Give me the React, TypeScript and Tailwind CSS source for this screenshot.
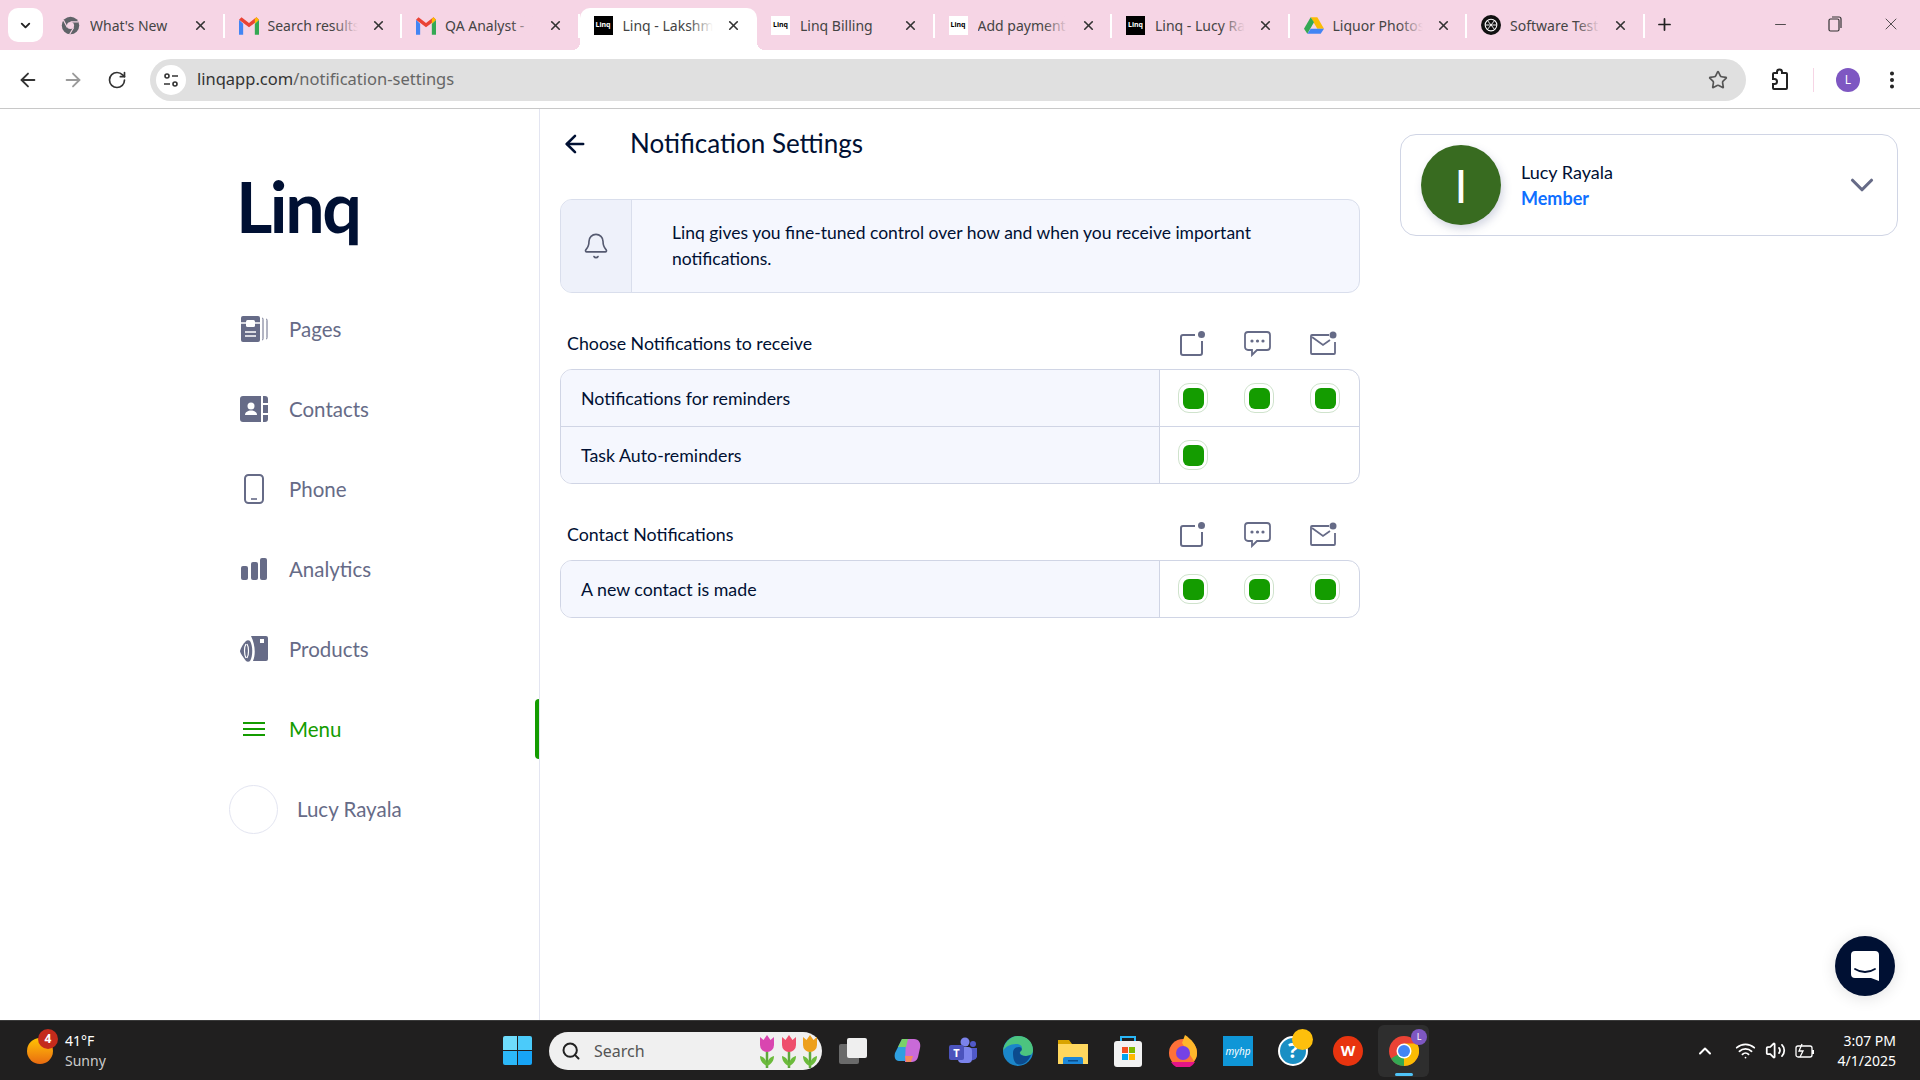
import { ArrowLeft, ArrowRight, Bell, ChevronDown, ChevronUp, EllipsisVertical, Minus, Plus, RotateCw, Search, Star, Volume2, Wifi, X } from "lucide-react";
import type { ReactNode } from "react";

const FONT = "font-['Lato','Noto_Sans',sans-serif]";

function LinqFav({ dark }: { dark?: boolean }) {
    return (
        <span className={`flex h-[19px] w-[19px] items-center justify-center text-[7px] font-bold ${dark ? "bg-black text-white" : "bg-white text-black"}`}>
            Linq
        </span>
    );
}

function GmailFav() {
    return (
        <svg width="20" height="19" viewBox="0 0 24 22" fill="none">
            <path d="M0 4v18h5V9z" fill="#4285f4" />
            <path d="M24 4v18h-5V9z" fill="#34a853" />
            <path d="M0 4l12 9 12-9-3-3-9 7-9-7z" fill="#ea4335" />
            <path d="M19 9l5-5-3-3-2 2z" fill="#fbbc04" />
        </svg>
    );
}

function ChromeFav() {
    return (
        <svg width="19" height="19" viewBox="0 0 24 24">
            <circle cx="12" cy="12" r="11" fill="#5f6368" />
            <circle cx="12" cy="12" r="4.5" fill="#f6d5e5" />
            <path d="M12 7.5h10M8 14.5L3 5M16 14.5L11 23" stroke="#f6d5e5" strokeWidth="1.5" />
        </svg>
    );
}

function DriveFav() {
    return (
        <svg width="20" height="19" viewBox="0 0 24 22">
            <path d="M8 1h8l8 14h-8z" fill="#fbbc04" />
            <path d="M8 1L0 15l4 6 8-14z" fill="#34a853" />
            <path d="M4 21h16l4-6H8z" fill="#4285f4" />
        </svg>
    );
}

function GptFav() {
    return (
        <svg width="20" height="20" viewBox="0 0 24 24" fill="none">
            <circle cx="12" cy="12" r="12" fill="#111" />
            <circle cx="12" cy="12" r="7" stroke="#fff" strokeWidth="1.3" />
            <path d="M8 7l8 10M16 7L8 17M5 12h14" stroke="#fff" strokeWidth="1.1" />
        </svg>
    );
}

const tabs: { title: string; icon: ReactNode; active?: boolean; fade?: boolean }[] = [
    { title: "What's New", icon: <ChromeFav /> },
    { title: "Search results", icon: <GmailFav />, fade: true },
    { title: "QA Analyst -", icon: <GmailFav />, fade: true },
    { title: "Linq - Lakshmi", icon: <LinqFav dark />, active: true, fade: true },
    { title: "Linq Billing", icon: <LinqFav /> },
    { title: "Add payment", icon: <LinqFav />, fade: true },
    { title: "Linq - Lucy Rayala", icon: <LinqFav dark />, fade: true },
    { title: "Liquor Photos", icon: <DriveFav />, fade: true },
    { title: "Software Testing", icon: <GptFav />, fade: true },
];

function Tab({ title, icon, active, fade }: { title: string; icon: ReactNode; active?: boolean; fade?: boolean }) {
    return (
        <div className={`relative flex h-[42px] w-[177.5px] shrink-0 items-center pb-2 pl-[14px] ${active ? "rounded-t-[10px] bg-white" : ""}`}>
            {active && <span className="absolute bottom-0 -left-[8px] h-2 w-2 bg-[radial-gradient(circle_at_0_0,transparent_8px,white_8px)]" />}
            {active && <span className="absolute -right-[8px] bottom-0 h-2 w-2 bg-[radial-gradient(circle_at_100%_0,transparent_8px,white_8px)]" />}
            <span className="flex w-[29px] shrink-0">{icon}</span>
            <span className="relative w-[90px] overflow-hidden whitespace-nowrap text-[14px] text-[#444]">
                {title}
                {fade && <span className={`absolute top-0 right-0 h-full w-6 bg-gradient-to-r from-transparent ${active ? "to-white" : "to-[#f6d5e5]"}`} />}
            </span>
            <X size={15} strokeWidth={2.6} className="absolute left-[146px] text-[#333]" />
            {!active && <span className="absolute top-[6px] right-0 h-[24px] w-[2px] bg-white" />}
        </div>
    );
}

function TabStrip() {
    return (
        <div className="flex h-[50px] items-end bg-[#f6d5e5] font-['Noto_Sans',sans-serif]">
            <div className="mb-2 ml-2 mr-1 flex h-[34px] w-[35px] items-center justify-center rounded-[10px] bg-white">
                <ChevronDown size={15} strokeWidth={3} className="text-[#222]" />
            </div>
            {tabs.map((t) => (
                <Tab key={t.title} {...t} />
            ))}
            <Plus size={19} strokeWidth={2.2} className="mb-[16px] ml-[10px] text-[#222]" />
            <div className="mb-[16px] ml-auto flex items-center gap-[37px] pr-[19px] text-[#333]">
                <Minus size={17} strokeWidth={1.2} />
                <svg width="18" height="18" viewBox="0 0 18 18" fill="none" stroke="currentColor" strokeWidth="1.2">
                    <rect x="3" y="4" width="10" height="12" rx="1.5" />
                    <path d="M6 2h7a2 2 0 012 2v9" />
                </svg>
                <X size={20} strokeWidth={1} />
            </div>
        </div>
    );
}

function Toolbar() {
    return (
        <div className="flex h-[59px] items-center border-b border-[#c8c8c8] bg-white pt-[1px] font-['Noto_Sans',sans-serif]">
            <div className="flex w-[150px] shrink-0 items-center gap-[23px] pl-[17px] text-[#333]">
                <ArrowLeft size={22} />
                <ArrowRight size={22} className="text-[#9a9a9a]" />
                <RotateCw size={20} />
            </div>
            <div className="flex h-[42px] w-[1596px] shrink-0 items-center rounded-full bg-[#e0e0e0] pl-[6px]">
                <div className="flex h-[30px] w-[30px] items-center justify-center rounded-full bg-white">
                    <svg width="18" height="18" viewBox="0 0 18 18" fill="none" stroke="#333" strokeWidth="1.6">
                        <circle cx="5" cy="5" r="2" />
                        <path d="M10 5h6M2 13h6" />
                        <circle cx="13" cy="13" r="2" />
                    </svg>
                </div>
                <span className="ml-[11px] text-[16.5px] text-[#333]">
                    linqapp.com<span className="text-[#666]">/notification-settings</span>
                </span>
                <Star size={20} className="ml-auto mr-[18px] text-[#555]" />
            </div>
            <svg width="24" height="24" viewBox="0 0 24 24" fill="none" stroke="#222" strokeWidth="2" className="ml-[22px]">
                <path d="M9 4a2.500 2.500 0 015 0v1h4a1 1 0 011 1v14a1 1 0 01-1 1H6a1 1 0 01-1-1v-4h1.500a2.500 2.500 0 000-5H5V6a1 1 0 011-1h3z" />
            </svg>
            <span className="ml-[21px] h-[24px] w-px bg-[#f6d5e5]" />
            <span className="ml-[22px] flex h-[24px] w-[24px] items-center justify-center rounded-full bg-[#7e57c2] text-[12px] text-white">L</span>
            <EllipsisVertical size={22} strokeWidth={2.4} className="ml-[21px] text-[#222]" />
        </div>
    );
}

function PagesIcon() {
    return (
        <svg width="28" height="28" viewBox="0 0 28 28" fill="none">
            <rect x="1" y="1" width="19" height="26" rx="2" fill="#666b87" />
            <rect x="6" y="5" width="9" height="7" rx="1.5" fill="#fff" />
            <path d="M1 8h19M5 17h11M5 21h11" stroke="#fff" strokeWidth="1.4" />
            <path d="M22 3c1 0 1 1 1 2v18c0 1 0 2-1 2M26 4c1 0 1 1 1 2v16c0 1 0 2-1 2" stroke="#666b87" strokeWidth="1" />
        </svg>
    );
}

function ContactsIcon() {
    return (
        <svg width="28" height="28" viewBox="0 0 28 28">
            <path d="M3 1h18v26H3a3 3 0 01-3-3V4a3 3 0 013-3z" fill="#666b87" />
            <path d="M23 1h2a3 3 0 013 3v4h-5zM23 10h5v8h-5zM23 20h5v4a3 3 0 01-3 3h-2z" fill="#666b87" />
            <circle cx="11" cy="11" r="3.5" fill="#fff" />
            <path d="M5 20c0-3 3-4.500 6-4.500s6 1.500 6 4.500z" fill="#fff" />
        </svg>
    );
}

function PhoneIcon() {
    return (
        <svg width="28" height="30" viewBox="0 0 28 30" fill="none" stroke="#666b87">
            <rect x="5" y="1" width="18" height="28" rx="3.500" strokeWidth="2" />
            <path d="M11 25h6" strokeWidth="1.6" />
        </svg>
    );
}

function AnalyticsIcon() {
    return (
        <svg width="28" height="22" viewBox="0 0 28 22" fill="#666b87">
            <rect x="1" y="8" width="7" height="14" rx="2" />
            <rect x="11" y="4" width="7" height="18" rx="2" />
            <rect x="20" y="0" width="7" height="22" rx="2" />
        </svg>
    );
}

function ProductsIcon() {
    return (
        <svg width="28" height="28" viewBox="0 0 28 28">
            <path d="M11 1h15a2 2 0 012 2v21a2 2 0 01-2 2H13c3-7 2-17-2-25z" fill="#666b87" />
            <rect x="20" y="4" width="4" height="4" fill="#fff" />
            <path d="M6 6c1-1 3-1 4 0 3 5 3 15 0 20-1 1-3 1-4 0C3 22 0 18 0 16c1-4 3-7 6-10z" fill="#666b87" />
            <path d="M6 9C4 12 4 19 6 23M7 9c2 3 2 11 0 14" stroke="#fff" strokeWidth="1.2" fill="none" />
        </svg>
    );
}

function MenuIcon() {
    return (
        <svg width="28" height="16" viewBox="0 0 28 16" stroke="#149c00" strokeWidth="1.8">
            <path d="M3 2h22M3 8h22M3 14h22" />
        </svg>
    );
}

const navItems: { label: string; icon: ReactNode; active?: boolean }[] = [
    { label: "Pages", icon: <PagesIcon /> },
    { label: "Contacts", icon: <ContactsIcon /> },
    { label: "Phone", icon: <PhoneIcon /> },
    { label: "Analytics", icon: <AnalyticsIcon /> },
    { label: "Products", icon: <ProductsIcon /> },
    { label: "Menu", icon: <MenuIcon />, active: true },
];

function Sidebar() {
    return (
        <aside className="w-[540px] shrink-0 border-r border-[#e3e5f1]">
            <div className="h-[180px] pl-[236px] pt-[52px] text-[70px] font-bold leading-[90px] tracking-[-2.500px] text-[#001033]">Linq</div>
            {navItems.map((item) => (
                <div key={item.label} className="relative flex h-[80px] items-center pl-[240px]">
                    <span className="flex w-[49px] shrink-0">{item.icon}</span>
                    <span className={`text-[20.5px] ${item.active ? "text-[#149c00]" : "text-[#666b87]"}`}>{item.label}</span>
                    {item.active && <span className="absolute right-0 top-[10px] h-[60px] w-[4px] rounded-l-[4px] bg-[#149c00]" />}
                </div>
            ))}
            <div className="flex h-[80px] items-center pl-[229px]">
                <span className="h-[49px] w-[49px] rounded-full border border-[#e3e5f1]" />
                <span className="ml-[19px] text-[20.5px] text-[#666b87]">Lucy Rayala</span>
            </div>
        </aside>
    );
}

function AppIcon() {
    return (
        <svg width="25" height="25" viewBox="0 0 25 25" fill="none" stroke="#666b87" strokeWidth="2">
            <path d="M15 4H3a2 2 0 00-2 2v16a2 2 0 002 2h17a2 2 0 002-2V10" />
            <circle cx="21.500" cy="3.500" r="3.500" fill="#666b87" stroke="none" />
        </svg>
    );
}

function SmsIcon() {
    return (
        <svg width="27" height="26" viewBox="0 0 27 26" fill="none" stroke="#666b87" strokeWidth="1.800">
            <path d="M4 1h19a3 3 0 013 3v12a3 3 0 01-3 3H13l-5 5v-5H4a3 3 0 01-3-3V4a3 3 0 013-3z" />
            <circle cx="8" cy="10" r="1.600" fill="#666b87" stroke="none" />
            <circle cx="13.500" cy="10" r="1.600" fill="#666b87" stroke="none" />
            <circle cx="19" cy="10" r="1.600" fill="#666b87" stroke="none" />
        </svg>
    );
}

function MailIcon() {
    return (
        <svg width="27" height="25" viewBox="0 0 27 25" fill="none" stroke="#666b87" strokeWidth="1.800">
            <path d="M19 4H2a1 1 0 00-1 1v17a1 1 0 001 1h22a1 1 0 001-1V11" />
            <path d="M2 6l11 8 7-5" />
            <circle cx="23" cy="4" r="3.500" fill="#666b87" stroke="none" />
        </svg>
    );
}

function SectionHead({ title }: { title: string }) {
    return (
        <div className="flex h-[76px] items-center pl-[7px] pr-[23px] pt-[25px] text-[17.8px] text-[#001033]">
            <span>{title}</span>
            <div className="ml-auto flex items-center gap-[39px]">
                <AppIcon />
                <SmsIcon />
                <MailIcon />
            </div>
        </div>
    );
}

function Check() {
    return (
        <span className="flex h-[30px] w-[30px] items-center justify-center rounded-[11px] border border-[#cfe3cc] bg-white">
            <span className="h-[21px] w-[21px] rounded-[6px] bg-[#149c00]" />
        </span>
    );
}

function Row({ label, count, last }: { label: string; count: number; last?: boolean }) {
    return (
        <div className={`flex ${last ? "h-[56px]" : "h-[57px] border-b border-[#d0d5e5]"}`}>
            <div className="flex w-[599px] items-center border-r border-[#d0d5e5] bg-[#f5f7fe] pl-[20px] text-[17.8px] text-[#001033]">{label}</div>
            <div className="flex flex-1 items-center gap-[36px] pl-[18px]">
                {Array.from({ length: count }).map((_, i) => (
                    <Check key={i} />
                ))}
            </div>
        </div>
    );
}

function NotificationSettings() {
    return (
        <main className="w-[800px] shrink-0 ml-[20px]">
            <div className="flex h-[69px] items-center text-[#001033]">
                <ArrowLeft size={28} strokeWidth={2.2} className="ml-[1px]" />
                <h1 className="ml-[41px] text-[26px]">Notification Settings</h1>
            </div>
            <div className="mt-[21px] flex h-[94px] overflow-hidden rounded-[12px] border border-[#d9deec] bg-[#f5f7fe]">
                <div className="flex w-[71px] items-center justify-center border-r border-[#d9deec] bg-[#eef1fa]">
                    <Bell size={28} strokeWidth={1.4} className="text-[#555a70]" />
                </div>
                <p className="flex w-[650px] items-center pb-[1px] pl-[40px] text-[17.5px] leading-[26px] text-[#001033]">
                    Linq gives you fine-tuned control over how and when you receive important notifications.
                </p>
            </div>
            <SectionHead title="Choose Notifications to receive" />
            <div className="overflow-hidden rounded-[12px] border border-[#d0d5e5]">
                <Row label="Notifications for reminders" count={3} />
                <Row label="Task Auto-reminders" count={1} last />
            </div>
            <SectionHead title="Contact Notifications" />
            <div className="overflow-hidden rounded-[12px] border border-[#d0d5e5]">
                <Row label="A new contact is made" count={3} last />
            </div>
        </main>
    );
}

function UserCard() {
    return (
        <div className="ml-[40px] mt-[25px] flex h-[102px] w-[498px] items-center self-start rounded-[16px] border border-[#d0d5e5] pl-[20px] pr-[16px]">
            <div className="flex h-[80px] w-[80px] items-center justify-center rounded-full bg-[#386b20] text-[46px] text-white shadow-[2px_4px_8px_rgba(80,90,140,0.25)]">I</div>
            <div className="ml-[20px] -mt-[1px] text-[18px] leading-[26px]">
                <div className="text-[#001033]">Lucy Rayala</div>
                <div className="font-bold text-[#0f6fff]">Member</div>
            </div>
            <ChevronDown size={38} strokeWidth={2} className="ml-auto text-[#666b87]" />
        </div>
    );
}

function Tulips() {
    const heads = [
        { x: 1, c: "#d946b0" },
        { x: 23, c: "#ee4f6c" },
        { x: 44, c: "#eda01c" },
    ];
    return (
        <svg width="60" height="34" viewBox="0 0 60 34">
            {heads.map((h) => (
                <g key={h.x}>
                    <path d={`M${h.x + 7} 14v20`} stroke="#5ea83a" strokeWidth="2.500" />
                    <path d={`M${h.x + 7} 32c-5-2-7-6-7-10 4 1 7 4 7 10zM${h.x + 7} 32c5-2 7-6 7-10-4 1-7 4-7 10z`} fill="#6cbb3c" />
                    <path d={`M${h.x} 3l3.500 3 3.500-5 3.500 5 3.500-3v8a7 7 0 01-14 0z`} fill={h.c} />
                </g>
            ))}
        </svg>
    );
}

function StartIcon() {
    return (
        <div className="grid h-[29px] w-[29px] shrink-0 grid-cols-2 gap-[1.5px]">
            <span className="rounded-tl-[2px] bg-[#6fdcfb]" />
            <span className="rounded-tr-[2px] bg-[#4bcbfa]" />
            <span className="rounded-bl-[2px] bg-[#2cb8f8]" />
            <span className="rounded-br-[2px] bg-[#17a4f6]" />
        </div>
    );
}

const taskIcons: ReactNode[] = [
    <svg width="30" height="30" viewBox="0 0 30 30"><rect x="1" y="8" width="20" height="20" rx="2" fill="#6a6a6a" /><rect x="9" y="2" width="20" height="20" rx="2" fill="#efefef" /></svg>,
    <svg width="30" height="30" viewBox="0 0 30 30" fill="none"><path d="M9 3h8l-5 22H6C2 25 1 21 2 17z" fill="#2f9fe0" /><path d="M13 3h8c5 0 7 4 6 9l-2 9c-1 4-4 5-7 5h-6z" fill="#c96ad8" /><path d="M9 3h6l-2 8H5z" fill="#7bd16a" /><path d="M12 20h8l-2 6h-5z" fill="#f58a5c" /></svg>,
    <svg width="30" height="30" viewBox="0 0 30 30"><circle cx="17" cy="6" r="4.500" fill="#7b83eb" /><circle cx="25" cy="8" r="3" fill="#5059c9" /><path d="M21 12h8v9a5 5 0 01-8 2z" fill="#5059c9" /><rect x="10" y="11" width="14" height="16" rx="4" fill="#7b83eb" /><rect x="1" y="9" width="15" height="15" rx="2" fill="#4b53bc" /><text x="8.500" y="21" fontSize="11" fontWeight="700" textAnchor="middle" fill="#fff">T</text></svg>,
    <svg width="30" height="30" viewBox="0 0 30 30"><circle cx="15" cy="15" r="15" fill="#1b86c9" /><path d="M15 0c9 0 15 6 15 14 0 4-3 6-7 6-4 0-6-2-6-4s2-2 2-4c0-2-2-4-6-4C7 8 2 11 0 15 1 7 7 0 15 0z" fill="#4cc47f" /><path d="M10 17c0-4 3-6 6-6s4 3 1 5c-1 2 1 4 6 4 2 0 3-1 5-1-3 7-8 11-14 9-3-2-4-6-4-11z" fill="#0c4b8e" /></svg>,
    <svg width="30" height="30" viewBox="0 0 30 30"><path d="M0 4h11l3 4h16v20H0z" fill="#d9a400" /><rect x="0" y="8" width="30" height="20" fill="#ffd75e" /><path d="M5 28v-5a2 2 0 012-2h16a2 2 0 012 2v5z" fill="#1c87d9" /><rect x="10" y="24" width="10" height="1.500" fill="#0a4d8c" /></svg>,
    <svg width="30" height="32" viewBox="0 0 30 32" fill="none"><path d="M8 7V2h14v5" stroke="#29b6f6" strokeWidth="2" /><rect x="1" y="6" width="28" height="26" rx="3" fill="#f2f2f2" /><rect x="9" y="12" width="6" height="6" fill="#f25022" /><rect x="16" y="12" width="6" height="6" fill="#7fba00" /><rect x="9" y="19" width="6" height="6" fill="#00a4ef" /><rect x="16" y="19" width="6" height="6" fill="#ffb900" /></svg>,
    <svg width="30" height="32" viewBox="0 0 30 32"><circle cx="15" cy="18" r="14" fill="#ff7139" /><path d="M17 0c6 4 12 10 12 18 0 3-1 6-3 8L14 8z" fill="#ffb72b" /><circle cx="15" cy="18" r="7" fill="#7542e5" /><path d="M3 27a14 14 0 0024 0z" fill="#e31587" /></svg>,
    <div className="flex h-[30px] w-[30px] flex-col items-center justify-center bg-[#0f96d7] text-[10px] italic leading-none text-white">myhp</div>,
    <div className="relative flex h-[30px] w-[30px] items-center justify-center rounded-full border-2 border-white bg-[#1a8fc4] text-[21px] font-bold text-white">?<span className="absolute -right-[7px] -top-[9px] h-[21px] w-[21px] rounded-full bg-[#fdbf0c]" /></div>,
    <div className="flex h-[30px] w-[30px] items-center justify-center rounded-full bg-[#e8340f] text-[15px] font-bold text-white">W</div>,
];

function ChromeApp() {
    return (
        <div className="relative ml-[15px] flex h-[52px] w-[51px] items-center justify-center rounded-[6px] bg-[#2e2e2e]">
            <svg width="30" height="30" viewBox="0 0 30 30">
                <circle cx="15" cy="15" r="15" fill="#ea4335" />
                <path d="M15 15L2 22.500A15 15 0 0015 30z" fill="#34a853" />
                <path d="M15 15v15A15 15 0 0028 7.500H15z" fill="#fbbc04" />
                <circle cx="15" cy="15" r="7.500" fill="#fff" />
                <circle cx="15" cy="15" r="6" fill="#4285f4" />
            </svg>
            <span className="absolute right-[2px] top-[4px] flex h-[16px] w-[16px] items-center justify-center rounded-full bg-[#7e57c2] text-[9px] text-white">L</span>
            <span className="absolute bottom-[1px] h-[3px] w-[18px] rounded-full bg-[#4fc3f7]" />
        </div>
    );
}

function Taskbar() {
    return (
        <div className="flex h-[60px] items-center border-t border-[#3a3a3a] bg-[#201f1f] font-['Noto_Sans',sans-serif] text-white">
            <div className="relative ml-[27px] h-[26px] w-[26px] shrink-0 rounded-full bg-gradient-to-b from-[#ffc400] to-[#e86a10]">
                <span className="absolute -right-[5px] -top-[9px] flex h-[20px] w-[20px] items-center justify-center rounded-full bg-[#c42b1c] text-[12px] font-bold">4</span>
            </div>
            <div className="ml-[12px] w-[60px] shrink-0 text-[14px] leading-[20px]">
                <div>41°F</div>
                <div className="text-[#ccc]">Sunny</div>
            </div>
            <div className="ml-[378px]">
                <StartIcon />
            </div>
            <div className="ml-[17px] flex h-[38px] w-[273px] shrink-0 items-center rounded-full bg-[#f0f0f0] pl-[12px] pr-[3px] text-[#555]">
                <Search size={20} strokeWidth={2.4} className="text-[#222]" />
                <span className="ml-[13px] text-[16px]">Search</span>
                <span className="ml-auto flex">
                    <Tulips />
                </span>
            </div>
            <div className="ml-[16px] flex items-center gap-[25px]">
                {taskIcons.map((icon, i) => (
                    <span key={i} className="flex h-[30px] w-[30px] items-center justify-center">{icon}</span>
                ))}
            </div>
            <ChromeApp />
            <div className="ml-auto flex items-center pr-[24px]">
                <ChevronUp size={20} strokeWidth={2.4} />
                <Wifi size={21} className="ml-[20px]" />
                <Volume2 size={21} className="ml-[9px]" />
                <svg width="21" height="16" viewBox="0 0 21 16" fill="none" stroke="#fff" strokeWidth="1.300" className="ml-[9px]">
                    <rect x="1" y="3" width="16" height="11" rx="2" />
                    <path d="M18 7v4" strokeWidth="2" />
                    <path d="M7 1L4 8h4l-3 6" />
                </svg>
                <div className="ml-[22px] text-right text-[14px] leading-[20px]">
                    <div>3:07 PM</div>
                    <div>4/1/2025</div>
                </div>
            </div>
        </div>
    );
}

export default function App() {
    return (
        <div className={`relative flex h-screen w-full flex-col overflow-hidden bg-white ${FONT}`}>
            <TabStrip />
            <Toolbar />
            <div className="flex min-h-0 flex-1">
                <Sidebar />
                <NotificationSettings />
                <UserCard />
            </div>
            <Taskbar />
            <div className="absolute left-[1835px] top-[936px] flex h-[60px] w-[60px] items-center justify-center rounded-full bg-[#001033] shadow-[0_2px_16px_rgba(0,0,0,0.12)]">
                <svg width="28" height="30" viewBox="0 0 28 30">
                    <path d="M4 0h20a4 4 0 014 4v26l-8-3H4a4 4 0 01-4-4V4a4 4 0 014-4z" fill="#fff" />
                    <path d="M4 18c6 4 14 4 20 0" stroke="#001033" strokeWidth="1.800" fill="none" strokeLinecap="round" />
                </svg>
            </div>
        </div>
    );
}
